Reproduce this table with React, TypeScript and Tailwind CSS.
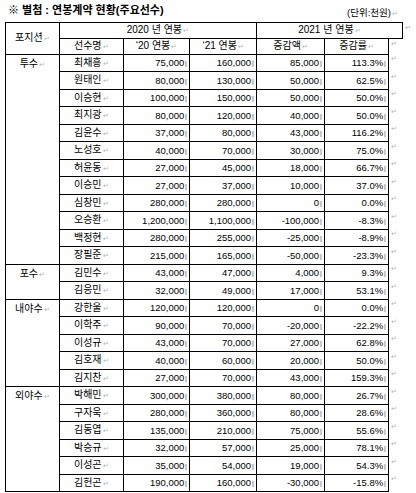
import React from 'react'

type Player = [string, string, string, string, string]

interface Group {
  pos: string
  players: Player[]
}

const groups: Group[] = [
  {
    pos: '투수',
    players: [
      ['최채흥', '75,000', '160,000', '85,000', '113.3%'],
      ['원태인', '80,000', '130,000', '50,000', '62.5%'],
      ['이승현', '100,000', '150,000', '50,000', '50.0%'],
      ['최지광', '80,000', '120,000', '40,000', '50.0%'],
      ['김윤수', '37,000', '80,000', '43,000', '116.2%'],
      ['노성호', '40,000', '70,000', '30,000', '75.0%'],
      ['허윤동', '27,000', '45,000', '18,000', '66.7%'],
      ['이승민', '27,000', '37,000', '10,000', '37.0%'],
      ['심창민', '280,000', '280,000', '0', '0.0%'],
      ['오승환', '1,200,000', '1,100,000', '-100,000', '-8.3%'],
      ['백정현', '280,000', '255,000', '-25,000', '-8.9%'],
      ['장필준', '215,000', '165,000', '-50,000', '-23.3%'],
    ],
  },
  {
    pos: '포수',
    players: [
      ['김민수', '43,000', '47,000', '4,000', '9.3%'],
      ['김응민', '32,000', '49,000', '17,000', '53.1%'],
    ],
  },
  {
    pos: '내야수',
    players: [
      ['강한울', '120,000', '120,000', '0', '0.0%'],
      ['이학주', '90,000', '70,000', '-20,000', '-22.2%'],
      ['이성규', '43,000', '70,000', '27,000', '62.8%'],
      ['김호재', '40,000', '60,000', '20,000', '50.0%'],
      ['김지찬', '27,000', '70,000', '43,000', '159.3%'],
    ],
  },
  {
    pos: '외야수',
    players: [
      ['박해민', '300,000', '380,000', '80,000', '26.7%'],
      ['구자욱', '280,000', '360,000', '80,000', '28.6%'],
      ['김동엽', '135,000', '210,000', '75,000', '55.6%'],
      ['박승규', '32,000', '57,000', '25,000', '78.1%'],
      ['이성곤', '35,000', '54,000', '19,000', '54.3%'],
      ['김헌곤', '190,000', '160,000', '-30,000', '-15.8%'],
    ],
  },
]

// paragraph mark after a text
function Mark() {
  return <span className="ml-px text-[7px] text-[#b4b4b4]">↵</span>
}

// small cell-end mark after numbers
function CellEnd() {
  return <span className="ml-px inline-block h-[6px] w-[2px] bg-[#c8c8c8] align-[-1px]" />
}

// mark that sits outside the table at the end of each row
function RowEnd() {
  return (
    <td className="w-[14px] pl-[2px] align-top text-[7px] leading-[10px] text-[#b4b4b4]">↵</td>
  )
}

const cell = 'border border-black'

function Num({ v }: { v: string }) {
  return (
    <td className={`${cell} pr-[2px] text-right align-middle text-[9.5px] leading-none whitespace-nowrap`}>
      {v}
      <CellEnd />
    </td>
  )
}

export default function App() {
  return (
    <div className="h-[493px] w-[416px] bg-white pt-[3px] text-black [font-family:'Liberation_Sans','Noto_Sans_CJK_KR',sans-serif]">
      <div className="flex items-start justify-between pl-[8px] pr-[18px]">
        <span className="text-[11px] font-bold leading-[14px]">※ 별첨 : 연봉계약 현황(주요선수)</span>
        <span className="mt-[4px] text-[9.5px] leading-[12px]">
          (단위:천원)
          <Mark />
        </span>
      </div>
      <table className="mt-[2px] ml-[5px] table-fixed border-collapse">
        <colgroup>
          <col className="w-[57px]" />
          <col className="w-[68px]" />
          <col className="w-[68px]" />
          <col className="w-[68px]" />
          <col className="w-[70px]" />
          <col className="w-[66px]" />
          <col className="w-[14px]" />
        </colgroup>
        <tbody>
          <tr className="h-[15.5px] text-[10px] leading-none">
            <td rowSpan={2} className={`${cell} text-center align-middle`}>
              포지션
              <Mark />
            </td>
            <td colSpan={3} className={`${cell} text-center`}>
              2020 년 연봉
              <Mark />
            </td>
            <td colSpan={3} className={`${cell} text-center`}>
              2021 년 연봉
              <Mark />
            </td>
            <RowEnd />
          </tr>
          <tr className="h-[16px] text-[10px] leading-none">
            <td className={`${cell} text-center`}>
              선수명
              <Mark />
            </td>
            <td className={`${cell} text-center`}>
              ‘20 연봉
              <Mark />
            </td>
            <td className={`${cell} text-center`}>
              ‘21 연봉
              <Mark />
            </td>
            <td className={`${cell} text-center`}>
              증감액
              <Mark />
            </td>
            <td className={`${cell} text-center`}>
              증감률
              <Mark />
            </td>
            <RowEnd />
          </tr>
          {groups.map((g) =>
            g.players.map((p, i) => (
              <tr key={p[0]} className="h-[17.5px] text-[10px] leading-none">
                {i === 0 && (
                  <td rowSpan={g.players.length} className={`${cell} pt-[4px] text-center align-top`}>
                    {g.pos}
                    <Mark />
                  </td>
                )}
                <td className={`${cell} text-center align-middle`}>
                  {p[0]}
                  <Mark />
                </td>
                <Num v={p[1]} />
                <Num v={p[2]} />
                <Num v={p[3]} />
                <Num v={p[4]} />
                <RowEnd />
              </tr>
            ))
          )}
        </tbody>
      </table>
    </div>
  )
}
